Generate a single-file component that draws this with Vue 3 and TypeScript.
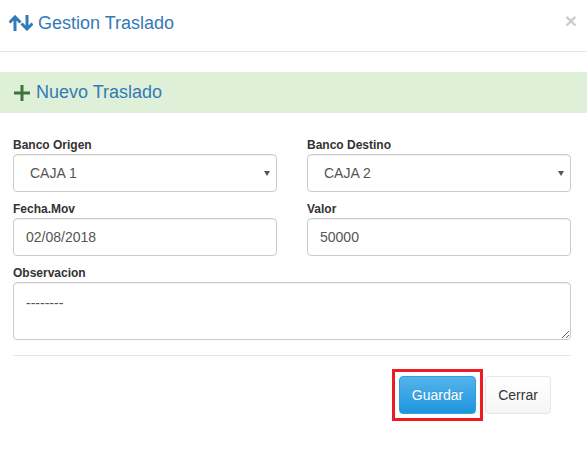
<template>
  <div class="modal">
    <div class="modal-head">
      <h4 class="modal-title">
        <svg class="ic-sort" width="24" height="16" viewBox="0 0 24 16" aria-hidden="true">
          <path d="M6 16V2M.5 7.5 6 2l5.5 5.5" />
          <path d="M18 0v14M12.500 8.500 18 14l5.500-5.500" />
        </svg>
        Gestion Traslado
      </h4>
      <button type="button" class="close" aria-label="Cerrar">×</button>
    </div>

    <div class="band">
      <svg class="ic-plus" width="16" height="16" viewBox="0 0 16 16" aria-hidden="true">
        <path d="M8 0v16M0 8h16" />
      </svg>
      <span>Nuevo Traslado</span>
    </div>

    <form class="form" @submit.prevent>
      <div class="grid">
        <div class="field">
          <label>Banco Origen</label>
          <div class="select-wrap">
            <select v-model="origen" class="control sel">
              <option v-for="b in bancos" :key="b">{{ b }}</option>
            </select>
          </div>
        </div>
        <div class="field">
          <label>Banco Destino</label>
          <div class="select-wrap">
            <select v-model="destino" class="control sel">
              <option v-for="b in bancos" :key="b">{{ b }}</option>
            </select>
          </div>
        </div>
        <div class="field">
          <label>Fecha.Mov</label>
          <input v-model="fecha" class="control" type="text" />
        </div>
        <div class="field">
          <label>Valor</label>
          <input v-model="valor" class="control" type="text" />
        </div>
        <div class="field wide">
          <label>Observacion</label>
          <textarea v-model="obs" class="control area"></textarea>
        </div>
      </div>
      <hr class="sep" />
      <div class="actions">
        <button type="submit" class="btn primary">Guardar</button>
        <button type="button" class="btn plain">Cerrar</button>
      </div>
    </form>
  </div>
</template>

<script setup lang="ts">
import { ref } from 'vue'

const bancos = ['CAJA 1', 'CAJA 2']
const origen = ref('CAJA 1')
const destino = ref('CAJA 2')
const fecha = ref('02/08/2018')
const valor = ref('50000')
const obs = ref('--------')
</script>

<style>
html, body { background: #fff; }
</style>

<style scoped>
.modal { width: 587px; height: 463px; background: #fff; font-family: "Liberation Sans", Arial, sans-serif; color: #333; overflow: hidden; box-sizing: border-box; }
.modal-head { height: 52px; box-sizing: border-box; border-bottom: 1px solid #e5e5e5; display: flex; align-items: flex-start; justify-content: space-between; padding: 14px 10px 0 9px; }
.modal-title { margin: 0; font-size: 18px; font-weight: 400; line-height: 19px; color: #337ab7; display: flex; align-items: center; gap: 5px; }
.ic-sort { fill: none; stroke: #337ab7; stroke-width: 3; display: block; margin-top: -2px; }
.close { border: 0; background: none; padding: 0; font: 700 21px/1 "Liberation Sans", Arial, sans-serif; color: #000; opacity: .2; cursor: pointer; margin-top: -4px; }
.band { margin-top: 20px; height: 41px; background: #dff0d8; display: flex; align-items: center; gap: 6px; padding-left: 14px; font-size: 18px; color: #337ab7; }
.ic-plus { fill: none; stroke: #3c763d; stroke-width: 3; display: block; }
.form { padding: 23px 16px 0 13px; }
.grid { display: grid; grid-template-columns: 264px 264px; column-gap: 30px; row-gap: 8px; }
.field label { display: block; font-size: 12px; font-weight: 700; line-height: 17px; color: #333; height: 17px; padding-top: 1px; }
.wide { grid-column: 1 / 3; }
.control { display: block; width: 100%; box-sizing: border-box; height: 38px; border: 1px solid #ccc; border-radius: 4px; background: #fff; padding: 6px 12px; font: 14px/20px "Liberation Sans", Arial, sans-serif; color: #555; box-shadow: inset 0 1px 1px rgba(0,0,0,.075); outline: 0; }
.select-wrap { position: relative; }
.select-wrap::after { content: ""; position: absolute; right: 7px; top: 17px; border-left: 3px solid transparent; border-right: 3px solid transparent; border-top: 5px solid #555; pointer-events: none; }
.sel { appearance: none; -webkit-appearance: none; padding-left: 16px; }
.area { height: 58px; padding-top: 10px; resize: vertical; }
.sep { border: 0; border-top: 1px solid #e5e5e5; margin: 15px 0 20px; }
.actions { display: flex; justify-content: flex-end; gap: 9px; padding-right: 20px; }
.btn { height: 38px; box-sizing: border-box; border-radius: 4px; font: 14px/20px "Liberation Sans", Arial, sans-serif; cursor: pointer; padding: 0; }
.primary { position: relative; width: 77px; color: #fff; border: 1px solid #2e9fe0; background: linear-gradient(#54b4eb, #1d95dd); text-shadow: 0 -1px 0 rgba(0,0,0,.1); }
/* red mark drawn over the screenshot */
.primary::after { content: ""; position: absolute; inset: -8px; border: 3px solid #ed1c24; pointer-events: none; }
.plain { width: 66px; color: #333; border: 1px solid #e5e5e5; background: linear-gradient(#fff, #f5f5f5); }
</style>
